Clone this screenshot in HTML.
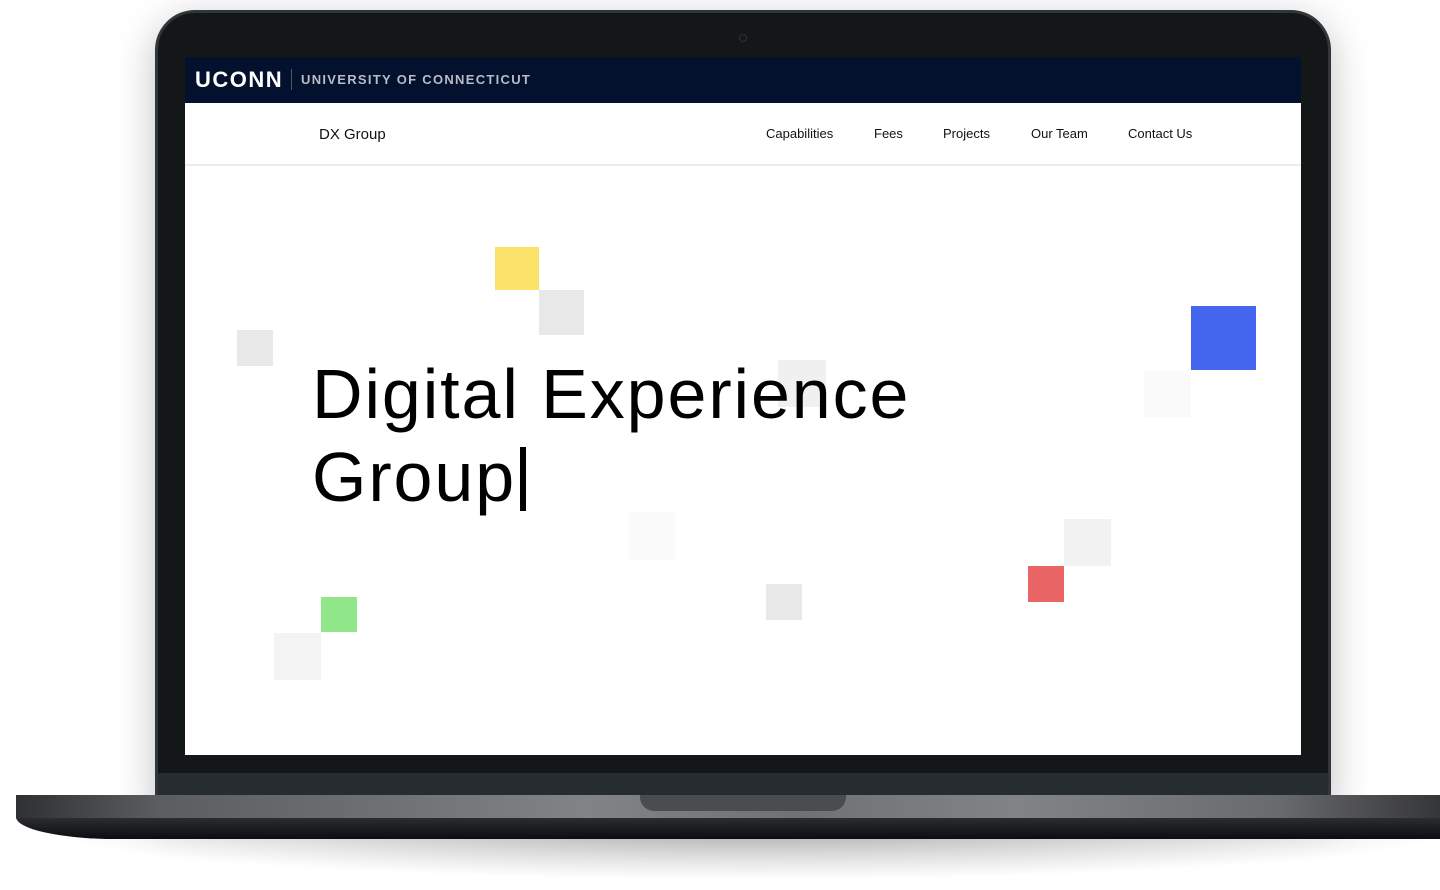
<!DOCTYPE html>
<html><head><style>
*{margin:0;padding:0;box-sizing:border-box}
body{width:1440px;height:890px;background:#fff;position:relative;overflow:hidden;font-family:"Liberation Sans",Arial,sans-serif}
.abs{position:absolute}
.lid{left:155px;top:10px;width:1176px;height:800px;background:#141717;border-radius:40px 40px 0 0;border:3px solid #30363a;box-shadow:0 10px 40px rgba(0,0,0,.25)}
.screen{left:185px;top:57px;width:1116px;height:698px;background:#fff;overflow:hidden}
.chin{left:158px;top:773px;width:1170px;height:24px;background:#262c2f}
.baseTop{left:16px;top:795px;width:1430px;height:23px;background:linear-gradient(90deg,#2f3034 0%,#5c5d61 10%,#6e6f73 25%,#828387 40%,#707175 55%,#828387 70%,#6a6b6f 88%,#333438 100%)}
.baseBot{left:16px;top:817px;width:1440px;height:22px;background:linear-gradient(#2c2e32,#0c0d10);border-radius:0 0 0 100px/0 0 0 22px}
.notch{left:640px;top:795px;width:206px;height:16px;background:#4b4c50;border-radius:0 0 14px 14px}
.shadow{left:40px;top:830px;width:1420px;height:50px;background:radial-gradient(ellipse at 50% 0,rgba(0,0,0,.28),rgba(0,0,0,0) 70%)}
.top{position:absolute;left:0;top:0;width:1116px;height:46px;background:#03102e}
.nav{position:absolute;left:0;top:46px;width:1116px;height:63px;border-bottom:2px solid #ececec;background:#fff}
.nav a{position:absolute;top:23px;font-size:13px;color:#111;text-decoration:none}
.sq{position:absolute}
h1{position:absolute;left:127px;top:296px;font-size:70px;font-weight:400;line-height:83px;color:#000;letter-spacing:1.9px}
</style></head><body>
<div class="abs shadow"></div>
<div class="abs lid"></div>
<div class="abs" style="left:739px;top:34px;width:8px;height:8px;border-radius:50%;border:1px solid #333"></div>
<div class="abs chin"></div>
<div class="abs baseBot"></div>
<div class="abs baseTop"></div>
<div class="abs notch"></div>
<div class="abs screen">
 <div class="top">
  <div style="position:absolute;left:10px;top:10px;color:#fff;font-weight:bold;font-size:22px;letter-spacing:1.5px">UCONN</div>
  <div style="position:absolute;left:106px;top:12px;width:1px;height:21px;background:#555"></div>
  <div style="position:absolute;left:116px;top:15px;color:#b8bcc4;font-weight:bold;font-size:13px;letter-spacing:1.3px">UNIVERSITY OF CONNECTICUT</div>
 </div>
 <div class="nav">
  <div style="position:absolute;left:134px;top:23px;font-size:15px;color:#111">DX Group</div>
  <a style="left:581px">Capabilities</a>
  <a style="left:689px">Fees</a>
  <a style="left:758px">Projects</a>
  <a style="left:846px">Our Team</a>
  <a style="left:943px">Contact Us</a>
 </div>
 <div class="sq" style="left:310px;top:190px;width:44px;height:43px;background:#fbe36a"></div>
 <div class="sq" style="left:354px;top:233px;width:45px;height:45px;background:#e8e8e8"></div>
 <div class="sq" style="left:52px;top:273px;width:36px;height:36px;background:#e8e8e8"></div>
 <div class="sq" style="left:593px;top:303px;width:48px;height:47px;background:#f0f0f0"></div>
 <div class="sq" style="left:1006px;top:249px;width:65px;height:64px;background:#4466ee"></div>
 <div class="sq" style="left:959px;top:313px;width:47px;height:47px;background:#fafafa"></div>
 <div class="sq" style="left:443px;top:455px;width:48px;height:48px;background:#fbfbfb"></div>
 <div class="sq" style="left:879px;top:462px;width:47px;height:47px;background:#f2f2f2"></div>
 <div class="sq" style="left:843px;top:509px;width:36px;height:36px;background:#e96566"></div>
 <div class="sq" style="left:581px;top:527px;width:36px;height:36px;background:#e8e8e8"></div>
 <div class="sq" style="left:136px;top:540px;width:36px;height:35px;background:#90e78a"></div>
 <div class="sq" style="left:89px;top:576px;width:47px;height:47px;background:#f3f3f3"></div>
 <h1>Digital Experience<br>Group<span style="display:inline-block;width:6px;height:64px;background:#000;margin-left:4px;vertical-align:-10px"></span></h1>
</div>
</body></html>
